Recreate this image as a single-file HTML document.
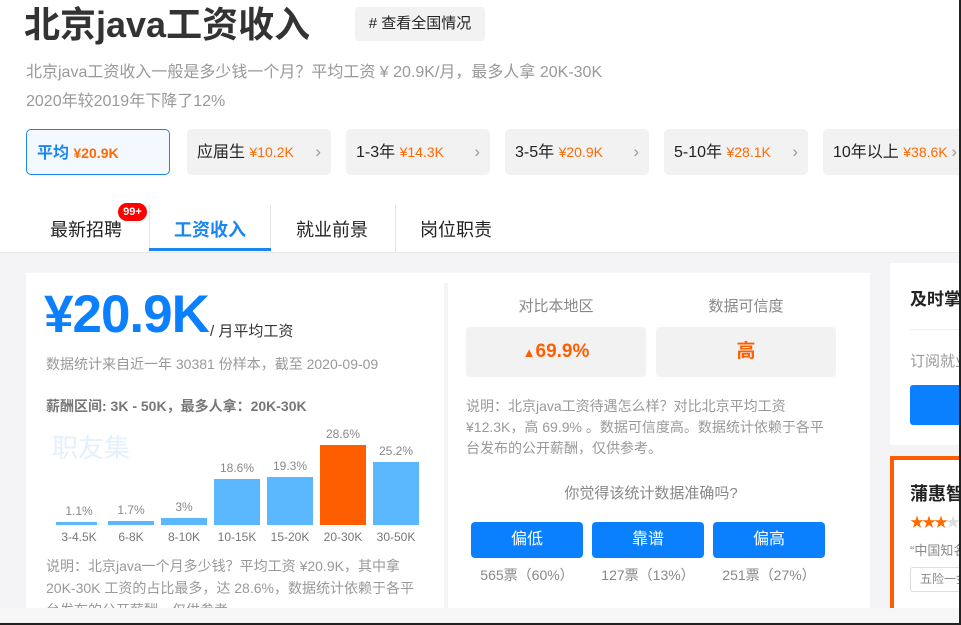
<!DOCTYPE html>
<html><head><meta charset="utf-8"><style>
*{margin:0;padding:0;box-sizing:border-box}
body{width:961px;height:625px;overflow:hidden;position:relative;background:#fff;font-family:"Liberation Sans","Noto Sans CJK SC",sans-serif;color:#333}
.a{position:absolute;white-space:nowrap}
.pill{position:absolute;top:129px;height:46px;width:144px;border-radius:5px;background:#f2f2f3;font-size:16px;line-height:46px;padding-left:10px;color:#222}
.pill b{font-weight:normal;color:#ff6a00;font-size:14px}
.pill i{position:absolute;right:10px;top:0;font-style:normal;color:#999;font-size:17px}
.bar{position:absolute;background:#5bb7fe;width:46px}
.pct{position:absolute;font-size:12px;color:#888;width:46px;text-align:center}
.lab{position:absolute;top:530px;font-size:12px;color:#777;width:56px;text-align:center}
.btn{position:absolute;top:522px;width:112px;height:36px;background:#0a80ff;border-radius:4px;color:#fff;font-size:16px;text-align:center;line-height:36px}
.vt{position:absolute;top:565px;width:112px;text-align:center;font-size:14px;color:#888}
</style></head><body>
<div class="a" style="left:24px;top:-4px;font-size:36px;font-weight:bold;color:#333">北京java工资收入</div>
<div class="a" style="left:355px;top:7px;width:130px;height:34px;background:#f2f2f3;border-radius:4px;font-size:15px;line-height:34px;text-align:center;color:#222"># 查看全国情况</div>
<div class="a" style="left:26px;top:58px;font-size:16px;color:#999">北京java工资收入一般是多少钱一个月？平均工资 ¥ 20.9K/月，最多人拿 20K-30K</div>
<div class="a" style="left:26px;top:87px;font-size:16px;color:#999">2020年较2019年下降了12%</div>
<div class="pill" style="left:26px;background:#f3f9ff;border:1px solid #1a86f0;color:#1a86f0;font-weight:bold">平均 <b style="font-weight:bold">¥20.9K</b></div>
<div class="pill" style="left:187px">应届生 <b>¥10.2K</b><i>›</i></div>
<div class="pill" style="left:346px">1-3年 <b>¥14.3K</b><i>›</i></div>
<div class="pill" style="left:505px">3-5年 <b>¥20.9K</b><i>›</i></div>
<div class="pill" style="left:664px">5-10年 <b>¥28.1K</b><i>›</i></div>
<div class="pill" style="left:823px">10年以上 <b>¥38.6K</b><i>›</i></div>
<div class="a" style="left:50px;top:216px;font-size:18px;color:#222">最新招聘</div>
<div class="a" style="left:118px;top:203px;width:29px;height:18px;border-radius:9px;background:#f00;color:#fff;font-size:11px;font-weight:bold;text-align:center;line-height:18px">99+</div>
<div class="a" style="left:149px;top:205px;width:122px;height:47px;border-left:1px solid #e6e6e6;border-right:1px solid #e6e6e6"></div>
<div class="a" style="left:174px;top:216px;font-size:18px;color:#1a86f0;font-weight:bold">工资收入</div>
<div class="a" style="left:149px;top:248px;width:122px;height:3px;background:#1a86f0"></div>
<div class="a" style="left:296px;top:216px;font-size:18px;color:#222">就业前景</div>
<div class="a" style="left:395px;top:205px;width:1px;height:47px;background:#e6e6e6"></div>
<div class="a" style="left:420px;top:216px;font-size:18px;color:#222">岗位职责</div>
<div class="a" style="left:0;top:252px;width:961px;height:373px;background:#f4f4f6;border-top:1px solid #e8e8e8"></div>
<div class="a" style="left:26px;top:273px;width:844px;height:335px;background:#fff"></div>
<div class="a" style="left:444px;top:283px;width:4px;height:325px;background:#f4f4f6"></div>
<div class="a" style="left:44px;top:284px;font-size:53px;font-weight:bold;color:#0a80ff;letter-spacing:-1px">¥20.9K</div>
<div class="a" style="left:210px;top:320px;font-size:15px;color:#333">/ 月平均工资</div>
<div class="a" style="left:46px;top:354px;font-size:14px;color:#999">数据统计来自近一年 30381 份样本，截至 2020-09-09</div>
<div class="a" style="left:46px;top:396px;font-size:14px;color:#777;font-weight:bold">薪酬区间: 3K - 50K，最多人拿：20K-30K</div>
<div class="a" style="left:52px;top:428px;font-size:26px;color:#e4f0fd">职友集</div>
<div class="bar" style="left:56px;top:522px;width:41px;height:3px"></div>
<div class="bar" style="left:108px;top:521px;height:4px"></div>
<div class="bar" style="left:161px;top:518px;height:7px"></div>
<div class="bar" style="left:214px;top:479px;height:46px"></div>
<div class="bar" style="left:267px;top:477px;height:48px"></div>
<div class="bar" style="left:320px;top:445px;height:80px;background:#ff5e00"></div>
<div class="bar" style="left:373px;top:462px;height:63px"></div>
<div class="pct" style="left:56px;top:504px">1.1%</div>
<div class="pct" style="left:108px;top:503px">1.7%</div>
<div class="pct" style="left:161px;top:500px">3%</div>
<div class="pct" style="left:214px;top:461px">18.6%</div>
<div class="pct" style="left:267px;top:459px">19.3%</div>
<div class="pct" style="left:320px;top:427px">28.6%</div>
<div class="pct" style="left:373px;top:444px">25.2%</div>
<div class="lab" style="left:51px">3-4.5K</div>
<div class="lab" style="left:103px">6-8K</div>
<div class="lab" style="left:156px">8-10K</div>
<div class="lab" style="left:209px">10-15K</div>
<div class="lab" style="left:262px">15-20K</div>
<div class="lab" style="left:315px">20-30K</div>
<div class="lab" style="left:368px">30-50K</div>
<div class="a" style="left:46px;top:555px;font-size:14px;line-height:22px;color:#999;height:53px;overflow:hidden;white-space:normal;width:375px">说明：北京java一个月多少钱？平均工资 ¥20.9K，其中拿 20K-30K 工资的占比最多，达 28.6%，数据统计依赖于各平台发布的公开薪酬，仅供参考。</div>
<div class="a" style="left:466px;top:295px;width:180px;text-align:center;font-size:15px;color:#888">对比本地区</div>
<div class="a" style="left:656px;top:295px;width:180px;text-align:center;font-size:15px;color:#888">数据可信度</div>
<div class="a" style="left:466px;top:327px;width:180px;height:50px;background:#f2f2f3;border-radius:4px;text-align:center;line-height:50px;font-size:19px;font-weight:bold;color:#ff5e00"><span style="font-size:13px">▲</span>69.9%</div>
<div class="a" style="left:656px;top:327px;width:180px;height:50px;background:#f2f2f3;border-radius:4px;text-align:center;line-height:50px;font-size:19px;font-weight:bold;color:#ff5e00">高</div>
<div class="a" style="left:466px;top:396px;font-size:14px;line-height:21px;color:#999;white-space:normal;width:370px">说明：北京java工资待遇怎么样？对比北京平均工资<br>¥12.3K，高 69.9% 。数据可信度高。数据统计依赖于各平台发布的公开薪酬，仅供参考。</div>
<div class="a" style="left:466px;top:482px;width:370px;text-align:center;font-size:15px;color:#888">你觉得该统计数据准确吗?</div>
<div class="btn" style="left:471px">偏低</div>
<div class="btn" style="left:592px">靠谱</div>
<div class="btn" style="left:713px">偏高</div>
<div class="vt" style="left:471px">565票（60%）</div>
<div class="vt" style="left:592px">127票（13%）</div>
<div class="vt" style="left:713px">251票（27%）</div>
<div class="a" style="left:890px;top:263px;width:71px;height:182px;background:#fff"></div>
<div class="a" style="left:910px;top:285px;font-size:17px;font-weight:bold;color:#222">及时掌</div>
<div class="a" style="left:910px;top:329px;width:51px;height:1px;background:#eee"></div>
<div class="a" style="left:910px;top:350px;font-size:15px;color:#999">订阅就业</div>
<div class="a" style="left:910px;top:385px;width:51px;height:40px;background:#0a80ff;border-radius:3px"></div>
<div class="a" style="left:890px;top:456px;width:71px;height:160px;background:#fff;border:4px solid #ff5e00;border-right:none;border-bottom:none"></div>
<div class="a" style="left:910px;top:480px;font-size:18px;font-weight:bold;color:#222">蒲惠智</div>
<div class="a" style="left:910px;top:512px;font-size:14px;color:#ff6a00;letter-spacing:-2px">★★★<span style="color:#ddd">★</span></div>
<div class="a" style="left:910px;top:540px;font-size:13px;color:#888">“中国知名</div>
<div class="a" style="left:910px;top:567px;width:51px;height:25px;border:1px solid #ddd;border-radius:3px;font-size:12px;color:#888;line-height:23px;padding-left:9px;overflow:hidden">五险一金</div>
<div class="a" style="left:0;top:608px;width:961px;height:14px;background:#f7f7f8"></div>
<div class="a" style="left:0;top:623px;width:961px;height:2px;background:#222"></div>
<div class="a" style="left:959px;top:0;width:2px;height:625px;background:#222"></div>
</body></html>
